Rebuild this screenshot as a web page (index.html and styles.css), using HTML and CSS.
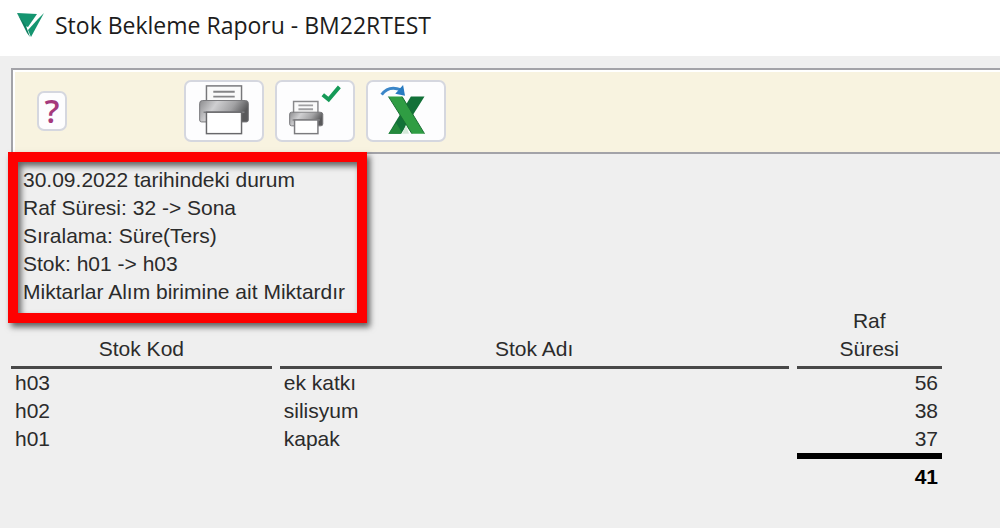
FILE: index.html
```html
<!DOCTYPE html>
<html lang="tr">
<head>
    <meta charset="UTF-8">
    <meta name="viewport" content="width=device-width, initial-scale=1.0">
    <title>Stok Bekleme Raporu - BM22RTEST</title>
    <link rel="stylesheet" href="styles.css">
</head>
<body>
    <!-- Pencere başlığı -->
    <header class="title-bar">
        <svg class="logo" viewBox="0 0 28 24" aria-hidden="true">
            <path d="M0 0 L20 1 L11 14 L8 13 Z" fill="#159570"/>
            <path d="M21 6 L27 0 L14 24 L11 17 Z" fill="#159570"/>
            <path d="M0 0 L9 13 L13 24 L10 20 Z" fill="#0c7f60"/>
        </svg>
        <h1 class="title">Stok Bekleme Raporu - BM22RTEST</h1>
    </header>

    <!-- Araç çubuğu -->
    <div class="toolbar">
        <button type="button" class="help-btn" aria-label="Yardım">?</button>
        <div class="actions">
            <button type="button" class="tool-btn" aria-label="Yazdır">
                <svg viewBox="0 0 78 60" aria-hidden="true">
                    <defs>
                        <linearGradient id="govde" x1="0" y1="0" x2="1" y2="0.3">
                            <stop offset="0" stop-color="#8c8c8e"/>
                            <stop offset="0.35" stop-color="#cfcfd1"/>
                            <stop offset="0.7" stop-color="#a2a2a4"/>
                            <stop offset="1" stop-color="#59595b"/>
                        </linearGradient>
                    </defs>
                    <rect x="21" y="4" width="36" height="18" fill="#fafafa" stroke="#77777a" stroke-width="1.5"/>
                    <path d="M28 10 H50 M28 15 H50" stroke="#858587" stroke-width="2"/>
                    <path d="M14 22 Q14 19 17 19 H61 Q64 19 64 22 V39 Q64 41 62 41 H16 Q14 41 14 39 Z" fill="url(#govde)" stroke="#77777a"/>
                    <path d="M18 31 H60" stroke="#808083" stroke-width="1.5"/>
                    <rect x="21" y="31" width="36" height="22" fill="#fff" stroke="#68686b" stroke-width="1.5"/>
                </svg>
            </button>
            <button type="button" class="tool-btn" aria-label="Hızlı yazdır">
                <svg viewBox="0 0 78 60" aria-hidden="true">
                    <rect x="17" y="20" width="25" height="13" fill="#fafafa" stroke="#89898b" stroke-width="1.5"/>
                    <path d="M22 24 H37 M22 28 H37" stroke="#a0a0a2" stroke-width="2"/>
                    <path d="M13 33 Q13 31 15 31 H44 Q47 31 47 33 V43 Q47 45 45 45 H15 Q13 45 13 43 Z" fill="url(#govde)" stroke="#77777a"/>
                    <path d="M16 39 H44" stroke="#808083" stroke-width="1.5"/>
                    <rect x="18" y="39" width="24" height="14" fill="#fff" stroke="#7b7b7e" stroke-width="1.5"/>
                    <path d="M47 13 L53 18 L64 5" fill="none" stroke="#159a57" stroke-width="4"/>
                </svg>
            </button>
            <button type="button" class="tool-btn" aria-label="Excel'e aktar">
                <svg viewBox="0 0 78 60" aria-hidden="true">
                    <path d="M44 15 H58 L34 53 H21 Z" fill="#127138"/>
                    <path d="M29 42 L35 52 L33 53 H21 Z" fill="#24893c"/>
                    <path d="M21 15 H35 L58 53 H45 Z" fill="#2f9d43"/>
                    <path d="M21 15 L45 53" stroke="#176c31"/>
                    <path d="M35 15 L58 53" stroke="#176c31"/>
                    <path d="M39 44 L42 53 H35 Z" fill="#d4e9d9"/>
                    <path d="M14 13 Q21 3 34 8" fill="none" stroke="#3b86c8" stroke-width="3"/>
                    <path d="M36 3 L38 14 L28 12 Z" fill="#287bc1"/>
                </svg>
            </button>
        </div>
    </div>

    <main class="report">
        <!-- Rapor kriterleri -->
        <section class="criteria">
            <p>30.09.2022 tarihindeki durum</p>
            <p>Raf Süresi: 32 -&gt; Sona</p>
            <p>Sıralama: Süre(Ters)</p>
            <p>Stok: h01 -&gt; h03</p>
            <p>Miktarlar Alım birimine ait Miktardır</p>
        </section>

        <!-- Stok listesi -->
        <table class="stock-table">
            <thead>
                <tr>
                    <th class="col-code">Stok Kod</th>
                    <th class="col-name">Stok Adı</th>
                    <th class="col-days">Raf<br>Süresi</th>
                </tr>
            </thead>
            <tbody>
                <tr>
                    <td>h03</td>
                    <td>ek katkı</td>
                    <td class="number">56</td>
                </tr>
                <tr>
                    <td>h02</td>
                    <td>silisyum</td>
                    <td class="number">38</td>
                </tr>
                <tr>
                    <td>h01</td>
                    <td>kapak</td>
                    <td class="number">37</td>
                </tr>
            </tbody>
            <tfoot>
                <tr>
                    <td></td>
                    <td></td>
                    <td class="number total">41</td>
                </tr>
            </tfoot>
        </table>
    </main>
</body>
</html>
```
FILE: styles.css
```css
* {
    box-sizing: border-box;
}

body {
    margin: 0;
    background-color: #efefef;
    color: #2b2b2b;
    font-family: "Liberation Sans", Arial, sans-serif;
    font-size: 21px;
    line-height: 28px;
}

/* Pencere başlığı */
.title-bar {
    display: flex;
    align-items: center;
    gap: 10px;
    height: 56px;
    padding: 0 17px 6px;
    background-color: #fff;
}

.logo {
    width: 28px;
    height: 24px;
}

.title {
    margin: 0;
    color: #1c1c1c;
    font-family: "Open Sans", "Segoe UI", sans-serif;
    font-size: 23px;
    font-weight: 400;
    white-space: nowrap;
}

/* Araç çubuğu */
.toolbar {
    display: flex;
    align-items: center;
    gap: 117px;
    margin: 12px 0 0 11px;
    padding: 10px 24px;
    background-color: #f8f3e0;
    border: 2px solid #a3a3a8;
    border-right: none;
    box-shadow: inset 2px 2px 0 #fff;
}

.actions {
    display: flex;
    gap: 11px;
}

.help-btn,
.tool-btn {
    padding: 0;
    background-color: #fdfdfe;
    border: 2px solid #d5d7df;
    border-radius: 7px;
    cursor: pointer;
}

.help-btn {
    width: 30px;
    height: 40px;
    color: #a4397c;
    font-family: "Open Sans", sans-serif;
    font-size: 33px;
    font-weight: 600;
    line-height: 36px;
}

.tool-btn {
    width: 80px;
    height: 62px;
}

.tool-btn svg {
    display: block;
    width: 100%;
}

/* Kırmızı çerçeveli kriter kutusu */
.report {
    padding: 0 50px 0 3px;
}

.criteria {
    position: relative;
    width: fit-content;
    margin: -2px 0 0 5px;
    padding: 4px 12px 7px 5px;
    border: 10px solid #fe0000;
    box-shadow: 3px 4px 6px rgba(0, 0, 0, 0.6), inset 3px 4px 6px rgba(0, 0, 0, 0.6);
}

.criteria p {
    margin: 0;
}

/* Stok tablosu */
.stock-table {
    width: 100%;
    margin-top: -16px;
    table-layout: fixed;
    border-collapse: separate;
    border-spacing: 8px 0;
}

.stock-table th {
    padding: 0 0 3px;
    border-bottom: 3px solid #484848;
    font-weight: 400;
    vertical-align: bottom;
}

.stock-table td {
    padding: 0 4px;
}

.col-code {
    width: 28.5%;
}

.col-name {
    width: 55.6%;
}

.stock-table .number {
    text-align: right;
}

.stock-table .total {
    padding-top: 4px;
    border-top: 6px solid #000;
    color: #000;
    font-weight: 700;
}
```
